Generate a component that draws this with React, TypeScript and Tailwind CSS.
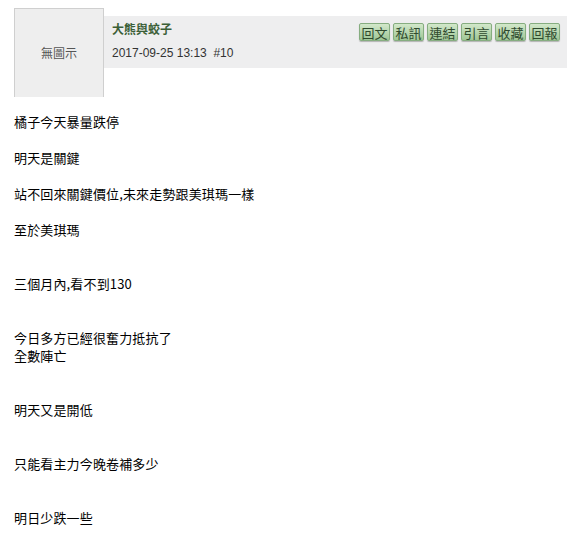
import React from 'react';

const buttons = ['回文', '私訊', '連結', '引言', '收藏', '回報'];

const lines: string[] = [
  '橘子今天暴量跌停',
  '',
  '明天是關鍵',
  '',
  '站不回來關鍵價位,未來走勢跟美琪瑪一樣',
  '',
  '至於美琪瑪',
  '',
  '',
  '三個月內,看不到130',
  '',
  '',
  '今日多方已經很奮力抵抗了',
  '全數陣亡',
  '',
  '',
  '明天又是開低',
  '',
  '',
  '只能看主力今晚卷補多少',
  '',
  '',
  '明日少跌一些',
];

const App = () => {
  return (
    <div className="w-[575px] h-[543px] bg-white overflow-hidden font-['Liberation_Sans','Noto_Sans_CJK_TC',sans-serif]">
      <div className="flex pl-[14px] pr-[8px] pt-[8px]">
        <div className="w-[90px] h-[89px] shrink-0 border border-[#cfcfcf] border-b-0 bg-[#eeeeee] flex items-center justify-center">
          <span className="text-[12px] text-[#555] font-['Noto_Sans_CJK_TC',sans-serif]">無圖示</span>
        </div>
        <div className="flex-1 mt-[8px] h-[52px] bg-[#eeeeef] flex justify-between">
          <div className="pl-[8px] pt-[5px]">
            <div className="text-[12px] leading-[16px] font-bold text-[#3b5f37] font-['Noto_Sans_CJK_TC',sans-serif]">
              大熊與蛟子
            </div>
            <div className="mt-[8px] text-[12px] leading-[16px] text-[#333] whitespace-pre">
              2017-09-25 13:13  #10
            </div>
          </div>
          <div className="flex gap-[3px] pt-[7px] pr-[7px]">
            {buttons.map((b) => (
              <div
                key={b}
                className="w-[31px] h-[18px] flex items-center justify-center rounded-[2px] border border-[#86ad80] bg-gradient-to-b from-[#d2e8ca] to-[#9fc696] shadow-[0_1px_1px_rgba(0,0,0,0.25)] text-[13px] leading-none text-[#2f4a2e] font-['Noto_Sans_CJK_TC',sans-serif]"
              >
                {b}
              </div>
            ))}
          </div>
        </div>
      </div>
      <div className="pl-[14px] mt-[16px] text-[13px] leading-[18px] tracking-[0.15px] text-black font-['Noto_Sans_CJK_TC',sans-serif]">
        {lines.map((l, i) => (
          <div key={i} className="h-[18px] whitespace-pre">
            {l}
          </div>
        ))}
      </div>
    </div>
  );
};

export default App;
